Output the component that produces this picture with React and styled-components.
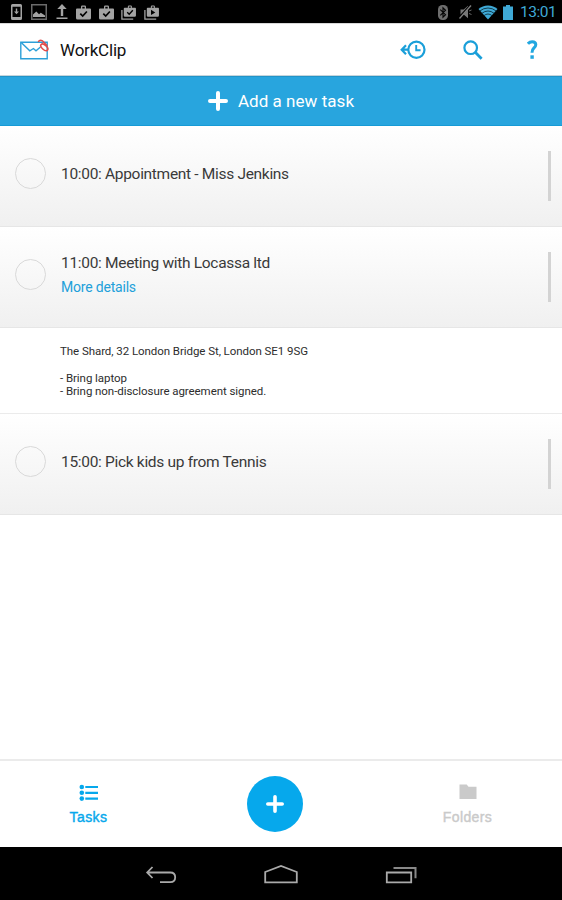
import React from "react";
import styled, { createGlobalStyle } from "styled-components";

const Colours = {
  BRAND: "#1a9fd9",
  BANNER: "#28a5de",
  ACCENT: "#06a8ec",
  HOLO: "#3fa9d6",
  STATUS_ICON: "#a3a3a3",
  MUTED: "#cacaca",
  TEXT: "#3a3a3a",
};

const TASKS = [
  { id: 1, title: "10:00: Appointment - Miss Jenkins" },
  {
    id: 2,
    title: "11:00: Meeting with Locassa ltd",
    details: [
      "The Shard, 32 London Bridge St, London SE1 9SG",
      "",
      "- Bring laptop",
      "- Bring non-disclosure agreement signed.",
    ],
  },
  { id: 3, title: "15:00: Pick kids up from Tennis" },
];

const BAG =
  "M1 3.5h4V1.8Q5 .5 6.3 .5h2.4Q10 .5 10 1.8v1.7h4q1 0 1 1v8.5q0 1.5-1.5 1.5h-12Q0 14.5 0 13V4.5q0-1 1-1zM6.3 3.5h2.4V1.8H6.3z";

const DownloadIcon = () => (
  <svg width="11" height="16" viewBox="0 0 11 16">
    <path
      fill={Colours.STATUS_ICON}
      fillRule="evenodd"
      d="M1.5 0h8Q11 0 11 1.5v13Q11 16 9.5 16h-8Q0 16 0 14.5v-13Q0 0 1.5 0zM1.5 2.8v10.2h8V2.8z"
    />
    <path fill={Colours.STATUS_ICON} d="M4.8 4.5h1.4v3H8l-2.5 2.8L3 7.5h1.8z" />
  </svg>
);

const PictureIcon = () => (
  <svg width="16" height="16" viewBox="0 0 16 16">
    <rect x=".75" y=".75" width="14.5" height="14.5" fill="none" stroke="#6a6a6a" strokeWidth="1.5" />
    <path fill={Colours.STATUS_ICON} d="M2 13v-2.5l3.3-3L8 10.3l1.8-1.5 4.2 2.7V13z" />
  </svg>
);

const UploadIcon = () => (
  <svg width="12" height="16" viewBox="0 0 12 16">
    <path fill={Colours.STATUS_ICON} d="M6 0l4.7 5H7.2v7H4.8V5H1.3zM.5 13.5h11V15H.5z" />
  </svg>
);

const BagIcon = () => (
  <svg width="15" height="15" viewBox="0 0 15 15">
    <path fill={Colours.STATUS_ICON} fillRule="evenodd" d={BAG} />
    <path fill="none" stroke="#000" strokeWidth="1.7" d="M4.3 8.7l2.4 2.4 4.2-4.6" />
  </svg>
);

const StackedBagIcon = ({ play }) => (
  <svg width="15" height="15" viewBox="0 0 15 15">
    <path fill="none" stroke={Colours.STATUS_ICON} strokeWidth="1.3" d="M.9 5v9.1h11.3" />
    <path
      fill={Colours.STATUS_ICON}
      fillRule="evenodd"
      transform="translate(2.8 0) scale(.81)"
      d={BAG}
    />
    {play ? (
      <path d="M7 4.8l4.3 2.6L7 10z" />
    ) : (
      <path fill="none" stroke="#000" strokeWidth="1.4" d="M6.2 7.3l2 2 3.6-4" />
    )}
  </svg>
);

const BluetoothIcon = () => (
  <svg width="10" height="15" viewBox="0 0 10 15">
    <rect width="10" height="15" rx="4.5" fill="#6d6d6d" />
    <path fill="none" stroke="#000" strokeWidth="1.1" d="M2.3 4.7l5.2 5L5 12.2V2.8l2.5 2.5-5.2 5" />
  </svg>
);

const MutedIcon = () => (
  <svg width="13" height="14" viewBox="0 0 13 14">
    <path fill="#777" d="M1.5 4.5h3.2L9 .8v12.4L4.7 9.5H1.5z" />
    <path stroke="#000" strokeWidth="2" d="M0 12.8L11.5 0" />
    <path stroke="#808080" strokeWidth="1.3" d="M.5 13.5L12 .5" />
    <path stroke="#666" d="M10 6l2.5-1M10 8.5l2.5 1" />
  </svg>
);

const WifiIcon = () => (
  <svg width="20" height="15" viewBox="0 0 20 15">
    <path fill={Colours.HOLO} d="M10 14.5L.5 4Q4.5.5 10 .5T19.5 4z" />
    <g fill="none" stroke="#0a3040" strokeWidth=".9">
      <path d="M1.8 6Q5.5 3 10 3t8.2 3" />
      <path d="M3.8 8.4Q6.7 6 10 6t6.2 2.4" />
      <path d="M5.8 10.8Q7.8 9 10 9t4.2 1.8" />
    </g>
  </svg>
);

const BatteryIcon = () => (
  <svg width="10" height="15" viewBox="0 0 10 15">
    <path fill={Colours.HOLO} d="M3 0h4v1.5h3V15H0V1.5h3z" />
  </svg>
);

const LogoIcon = () => (
  <svg width="29" height="21" viewBox="0 0 29 21">
    <g fill="none" stroke="#2c9fd8" strokeWidth="1.4">
      <path d="M.8 3.2h26.4v16.5H.8z" />
      <path d="M1.2 3.5l8.6 8.3 3.6-2.3 2.6 2.3 4.5-3.8" />
    </g>
    <g fill="none" stroke="#e14b4b" strokeWidth="1.6">
      <path d="M18.3 3Q19 1.3 20.8 1.3T24 3.5l3.3 3.2" />
      <ellipse cx="24.3" cy="8.3" rx="4.2" ry="2.3" transform="rotate(42 24.3 8.3)" />
    </g>
  </svg>
);

const SnoozeIcon = () => (
  <svg width="26" height="20" viewBox="0 0 26 20">
    <g fill="none" stroke={Colours.BRAND} strokeWidth="2.2">
      <circle cx="16.4" cy="9.7" r="8.1" />
      <path strokeWidth="1.9" d="M16.2 5v5.3h4.4" />
      <path d="M8.5 9.7H1.5M6 5.2L1.7 9.7 6 14.2" />
    </g>
  </svg>
);

const SearchIcon = () => (
  <svg width="20" height="20" viewBox="0 0 20 20">
    <g fill="none" stroke={Colours.BRAND}>
      <circle cx="7.7" cy="7.7" r="6.3" strokeWidth="2.2" />
      <path strokeWidth="2.8" d="M12 12l6.6 6.7" />
    </g>
  </svg>
);

const HelpIcon = () => (
  <svg width="11" height="20" viewBox="0 0 11 20">
    <path
      fill="none"
      stroke="#22a7e0"
      strokeWidth="3"
      d="M.9 3.7Q2.7 1.7 5.2 1.7q3.6 0 3.6 3.1 0 1.7-1.9 3.2Q5 9.6 5 12.8"
    />
    <path fill="#22a7e0" d="M3.4 15.3h3.4v3.5H3.4z" />
  </svg>
);

const PlusIcon = ({ size, weight }) => (
  <svg width={size} height={size} viewBox="0 0 20 20">
    <path
      fill="none"
      stroke="#fff"
      strokeLinecap="round"
      strokeWidth={weight}
      d="M10 2v16M2 10h16"
    />
  </svg>
);

const ListIcon = () => (
  <svg width="19" height="18" viewBox="0 0 19 18">
    <g fill={Colours.ACCENT}>
      <circle cx="2.8" cy="3" r="2.3" />
      <circle cx="2.8" cy="8.8" r="2.3" />
      <circle cx="2.8" cy="14.6" r="2.3" />
      <path d="M6.3 2H19v2.1H6.3zM6.3 7.8H19v2.1H6.3zM6.3 13.6H19v2.1H6.3z" />
    </g>
  </svg>
);

const FolderIcon = () => (
  <svg width="18" height="18" viewBox="0 0 18 18">
    <path fill={Colours.MUTED} d="M.5 .5h7.2l1.8 2.3h8V15H.5z" />
  </svg>
);

const BackIcon = () => (
  <svg width="32" height="20" viewBox="0 0 32 20">
    <path
      fill="none"
      stroke="#aaa"
      strokeWidth="1.8"
      d="M7.5 2L2.2 7.5l5.3 5.5M2.5 7.5h22.8q4.9 0 4.9 4.8t-4.9 4.9H15"
    />
  </svg>
);

const HomeIcon = () => (
  <svg width="34" height="20" viewBox="0 0 34 20">
    <path fill="none" stroke="#aaa" strokeWidth="1.8" d="M1.2 7L17 1l15.8 6v10.3H1.2z" />
  </svg>
);

const RecentsIcon = () => (
  <svg width="32" height="20" viewBox="0 0 32 20">
    <path fill="none" stroke="#aaa" strokeWidth="1.8" d="M1.8 7.5h24.4v9.9H1.8z" />
    <path fill="none" stroke="#888" strokeWidth="2" d="M8.5 3h22v10.3" />
  </svg>
);

const StatusBar = () => (
  <StatusStrip>
    <StatusGroup>
      <DownloadIcon />
      <PictureIcon />
      <UploadIcon />
      <BagIcon />
      <BagIcon />
      <StackedBagIcon />
      <StackedBagIcon play />
    </StatusGroup>
    <SystemGroup>
      <BluetoothIcon />
      <MutedIcon />
      <WifiIcon />
      <BatteryIcon />
      <Clock>13:01</Clock>
    </SystemGroup>
  </StatusStrip>
);

const Task = ({ task }) => (
  <>
    <TaskRow>
      <Checkbox aria-label="Complete task" />
      <TaskText>
        <TaskTitle>{task.title}</TaskTitle>
        {task.details && <DetailsLink>More details</DetailsLink>}
      </TaskText>
      <Handle />
    </TaskRow>
    {task.details && <Details>{task.details.join("\n")}</Details>}
  </>
);

const App = () => {
  return (
    <Screen>
      <GlobalStyle />
      <StatusBar />
      <Header>
        <LogoIcon />
        <AppName>WorkClip</AppName>
        <HeaderActions>
          <SnoozeIcon />
          <SearchIcon />
          <HelpIcon />
        </HeaderActions>
      </Header>
      <AddTask>
        <PlusIcon size={20} weight={4} />
        <span>Add a new task</span>
      </AddTask>
      <TaskList>
        {TASKS.map((task) => (
          <Task key={task.id} task={task} />
        ))}
      </TaskList>
      <TabBar>
        <Tab $active>
          <ListIcon />
          <TabLabel>Tasks</TabLabel>
        </Tab>
        <AddButton aria-label="Add">
          <PlusIcon size={18} weight={4} />
        </AddButton>
        <Tab>
          <FolderIcon />
          <TabLabel>Folders</TabLabel>
        </Tab>
      </TabBar>
      <SystemNav>
        <BackIcon />
        <HomeIcon />
        <RecentsIcon />
      </SystemNav>
    </Screen>
  );
};

export default App;

const GlobalStyle = createGlobalStyle`
  body {
    background: #fff;
    margin: 0;
  }

  *, *::before, *::after {
    box-sizing: border-box;
  }

  button {
    border: 0;
    font: inherit;
    padding: 0;
  }

  svg {
    display: block;
    flex: none;
  }
`;

const Screen = styled.div`
  display: flex;
  flex-direction: column;
  font-family: Roboto, sans-serif;
  height: 900px;
  overflow: hidden;
  width: 562px;
`;

const StatusStrip = styled.div`
  align-items: center;
  background: #000;
  display: flex;
  height: 23px;
  justify-content: space-between;
  padding: 1px 5px 0 11px;
`;

const StatusGroup = styled.div`
  align-items: center;
  display: flex;
  gap: 7.6px;

  svg:nth-child(2),
  svg:nth-child(3) {
    margin-left: 1.6px;
  }
`;

const SystemGroup = styled.div`
  align-items: center;
  display: flex;

  svg + svg {
    margin-left: 5px;
  }

  svg:nth-child(2) {
    margin-left: 11px;
  }

  svg:nth-child(3) {
    margin-left: 6px;
  }
`;

const Clock = styled.span`
  color: ${Colours.HOLO};
  font-size: 15.5px;
  letter-spacing: -0.5px;
  line-height: 22px;
  margin: 0 0 0 7px;
  width: 37px;
`;

const Header = styled.header`
  align-items: center;
  background: #fff;
  border-bottom: 1px solid #c5d5dc;
  border-top: 1px solid #d8d8d8;
  display: flex;
  height: 53px;
  padding: 0 24px 0 20px;
`;

const AppName = styled.h1`
  color: #111;
  font-size: 17px;
  font-weight: 400;
  letter-spacing: -0.2px;
  line-height: 20px;
  margin: 0 0 0 11px;
`;

const HeaderActions = styled.div`
  align-items: center;
  display: flex;
  margin-left: auto;

  svg:nth-child(2) {
    margin-left: 37px;
  }

  svg:nth-child(3) {
    margin-left: 44px;
  }
`;

const AddTask = styled.button`
  align-items: center;
  background: ${Colours.BANNER};
  border-bottom: 1px solid #169bd6;
  border-top: 1px solid #2294c8;
  color: #fff;
  display: flex;
  flex: none;
  font-size: 17px;
  gap: 10px;
  height: 50px;
  justify-content: center;
  letter-spacing: 0.05px;
`;

const TaskList = styled.main`
  flex: 1;
`;

const TaskRow = styled.div`
  align-items: center;
  background: linear-gradient(#fff, #f0f0f0);
  border-bottom: 1px solid #e6e6e6;
  display: flex;
  height: 101px;
  padding: 0 11px 0 15px;
`;

const Checkbox = styled.button`
  background: transparent;
  border: 1px solid #d9d9d9;
  border-radius: 50%;
  height: 31px;
  margin-top: -5px;
  width: 31px;
`;

const TaskText = styled.div`
  display: flex;
  flex: 1;
  flex-direction: column;
  gap: 4px;
  margin: -4px 0 0 15px;
`;

const TaskTitle = styled.div`
  color: ${Colours.TEXT};
  font-size: 15.5px;
  letter-spacing: -0.31px;
  line-height: 20px;
`;

const DetailsLink = styled.a`
  color: #22a0da;
  font-size: 14px;
  letter-spacing: -0.2px;
  line-height: 20px;
`;

const Handle = styled.div`
  background: #d3d3d3;
  height: 50px;
  width: 3px;
`;

const Details = styled.div`
  border-bottom: 1px solid #ebebeb;
  color: #2d2d2d;
  font-size: 11.5px;
  height: 86px;
  letter-spacing: -0.06px;
  line-height: 13.3px;
  padding: 17px 0 0 60px;
  white-space: pre-line;
`;

const TabBar = styled.nav`
  align-items: center;
  border-top: 2px solid #ebebeb;
  display: flex;
  height: 88px;
  padding-left: 49px;
`;

const Tab = styled.div`
  align-items: center;
  color: ${(props) => (props.$active ? Colours.ACCENT : Colours.MUTED)};
  display: flex;
  flex-direction: column;
  font-family: "Liberation Sans", sans-serif;
  font-size: 14px;
  gap: 6px;
  padding-top: 2px;
  width: 79px;
`;

const TabLabel = styled.span`
  -webkit-text-stroke: 0.4px currentColor;
  letter-spacing: 0.4px;
  line-height: 18px;
`;

const AddButton = styled.button`
  align-items: center;
  background: ${Colours.ACCENT};
  border-radius: 50%;
  display: flex;
  height: 56px;
  justify-content: center;
  margin: 0 125px 0 119px;
  width: 56px;
`;

const SystemNav = styled.footer`
  align-items: center;
  background: #000;
  display: flex;
  gap: 87px;
  height: 53px;
  justify-content: center;
  padding-top: 3px;
`;
